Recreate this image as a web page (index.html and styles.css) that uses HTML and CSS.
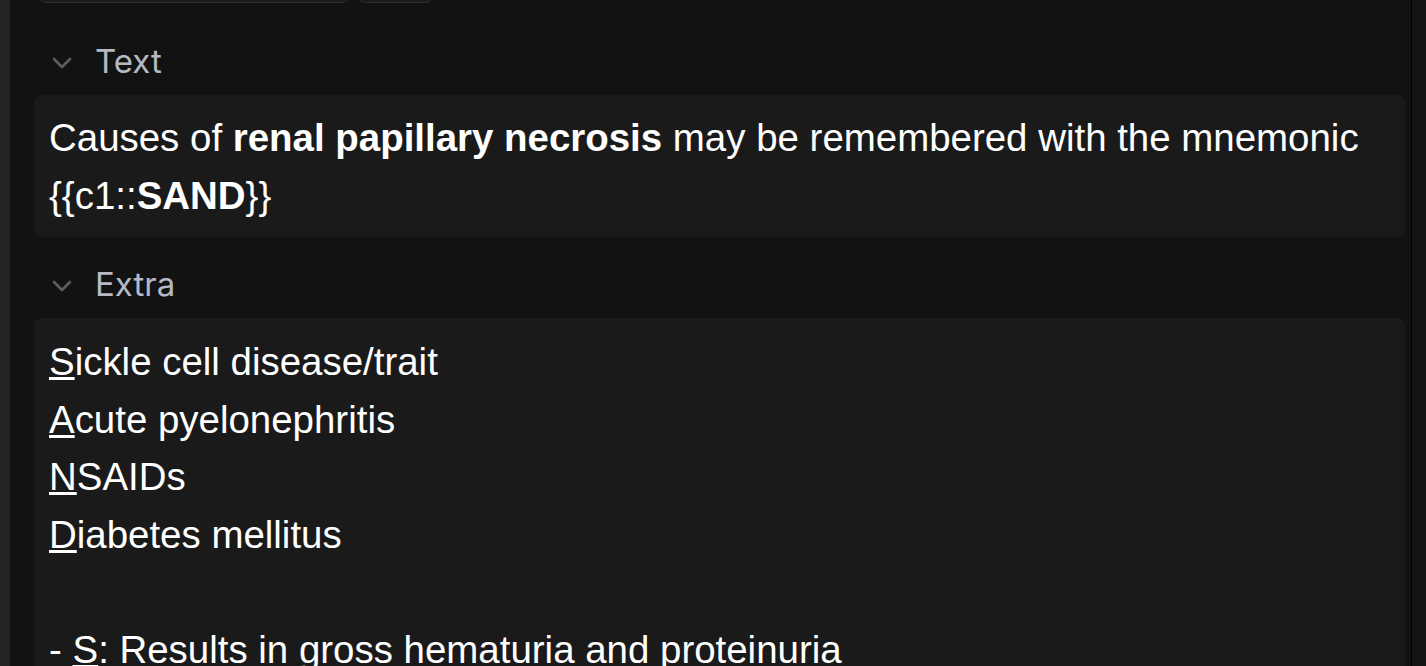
FILE: index.html
```html
<!DOCTYPE html>
<html>
<head>
<meta charset="utf-8">
<link rel="stylesheet" href="styles.css">
</head>
<body>
<div class="app">
  <div class="sidebar"></div>
  <div class="main">
    <div class="toolbar">
      <div class="btn btn-wide"></div>
      <div class="btn btn-small"></div>
    </div>
    <div class="fields">
      <div class="field">
        <div class="label-row">
          <svg class="chevron" width="20" height="12" viewBox="0 0 20 12"><path d="M2 2 L10 10 L18 2" fill="none" stroke="currentColor" stroke-width="2.6" stroke-linecap="round" stroke-linejoin="round"/></svg>
          <span class="label">Text</span>
        </div>
        <div class="editor">Causes of <b>renal papillary necrosis</b> may be remembered with the mnemonic {{c1::<b>SAND</b>}}</div>
      </div>
      <div class="field">
        <div class="label-row">
          <svg class="chevron" width="20" height="12" viewBox="0 0 20 12"><path d="M2 2 L10 10 L18 2" fill="none" stroke="currentColor" stroke-width="2.6" stroke-linecap="round" stroke-linejoin="round"/></svg>
          <span class="label">Extra</span>
        </div>
        <div class="editor extra"><u>S</u>ickle cell disease/trait<br><u>A</u>cute pyelonephritis<br><u>N</u>SAIDs<br><u>D</u>iabetes mellitus<br><br>- <u>S</u>: Results in gross hematuria and proteinuria</div>
      </div>
    </div>
  </div>
  <div class="divider"></div>
  <div class="rightstrip"></div>
</div>
</body>
</html>
```
FILE: styles.css
```css
html, body {
  margin: 0;
  padding: 0;
  background: #121212;
}
.app {
  display: flex;
  width: 1426px;
  height: 666px;
  overflow: hidden;
}
.sidebar {
  width: 10px;
  flex: none;
  background: #242424;
}
.main {
  flex: 1;
  background: #121212;
  display: flex;
  flex-direction: column;
  min-width: 0;
}
.toolbar {
  display: flex;
  gap: 7px;
  padding-left: 28px;
  margin-top: -37px;
  height: 40px;
}
.btn {
  height: 40px;
  box-sizing: border-box;
  border: 1px solid #2e2e2e;
  background: #1a1a1a;
  border-radius: 8px;
}
.btn-wide { width: 312px; }
.btn-small { width: 76px; }
.fields {
  display: flex;
  flex-direction: column;
  gap: 27px;
  padding: 38px 6px 0 24px;
}
.field {
  display: flex;
  flex-direction: column;
  gap: 14px;
}
.label-row {
  height: 40px;
  display: flex;
  align-items: center;
  padding-left: 18px;
}
.chevron {
  color: #5e5e5e;
  flex: none;
  margin-top: 3px;
}
.label {
  margin-left: 23px;
  font-family: Inter, "Noto Sans", sans-serif;
  font-size: 33px;
  color: #b6b9c4;
  line-height: 40px;
}
.editor {
  background: #1a1a1a;
  border-radius: 8px;
  padding: 14px 14px 13px 15px;
  font-family: "Liberation Sans", Arial, sans-serif;
  font-size: 38.45px;
  line-height: 57.5px;
  color: #ffffff;
}
.editor.extra {
  padding-top: 15px;
}
.editor b { font-weight: bold; }
.divider {
  width: 1px;
  flex: none;
  background: #000;
}
.rightstrip {
  width: 14px;
  flex: none;
  background: #141414;
}
```
